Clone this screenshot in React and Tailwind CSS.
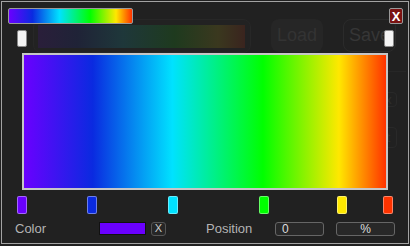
import React from "react";

const spectrum =
  "linear-gradient(to right, #6a00ff 0%, #0a2ae0 19%, #00e2ff 41%, #00ff00 66%, #ffe800 87%, #ff3300 100%)";

const stops = [
  { x: 15, color: "#6a00ff" },
  { x: 85, color: "#0a2ae0" },
  { x: 166, color: "#00e2ff" },
  { x: 257, color: "#00ff00" },
  { x: 335, color: "#ffe800" },
  { x: 381, color: "#ff3300" },
];

function Ghost() {
  // window sitting behind the popup, showing through faintly
  return (
    <div className="absolute inset-0 pointer-events-none pt-[19px] pl-[33px]">
      <div className="flex items-start">
        <div className="w-[218px] h-[34px] rounded-lg border border-[#272727] bg-[#222] pl-[4px] pt-[5px]">
          <div className="w-[207px] h-[23px] opacity-[0.11]" style={{ background: spectrum }} />
        </div>
        <div className="ml-[20px] w-[52px] h-[33px] rounded-lg bg-[#262626] flex items-center justify-center text-[18px] text-[#333]">
          Load
        </div>
        <div className="ml-[20px] w-[53px] h-[33px] rounded-lg border border-[#2b2b2b] flex items-center justify-center text-[18px] text-[#363636]">
          Save
        </div>
      </div>
      <div className="ml-[347px] mt-[18px] flex flex-col gap-[20px]">
        <div className="w-[26px] h-px bg-[#272727]" />
        <div className="w-[17px] h-[15px] rounded border border-[#292929] text-[13px] text-[#2f2f2f] flex items-center justify-center">
          x
        </div>
        <div className="w-[17px] h-[21px] rounded border border-[#292929] text-[13px] text-[#2f2f2f] flex items-center justify-center">
          t
        </div>
      </div>
    </div>
  );
}

export default function App() {
  return (
    <div
      className="relative w-[410px] h-[246px] bg-[#212121] overflow-hidden p-px"
      style={{ fontFamily: '"Liberation Sans", Arial, sans-serif' }}
    >
      <Ghost />
      <div className="relative w-[408px] h-[243px] border border-[#a3a3a3]">
        {/* top row: preview + close */}
        <div className="flex items-start justify-between mt-[6px] pl-[6px] pr-[5px]">
          <div
            className="w-[125px] h-[16px] rounded-[2px] border border-[#9a9a9a]"
            style={{ background: spectrum }}
          />
          <button className="w-[14px] h-[16px] rounded-[2px] border border-[#999] bg-[#7a1212] text-white text-[13px] font-bold leading-none flex items-center justify-center">
            X
          </button>
        </div>

        {/* range handles */}
        <div className="flex justify-between mt-[6px] pl-[15px] pr-[14px]">
          <div className="w-[10px] h-[17px] rounded-[2px] border border-[#8a8a8a] bg-[#f4f4f4]" />
          <div className="w-[10px] h-[17px] rounded-[2px] border border-[#8a8a8a] bg-[#f4f4f4]" />
        </div>

        {/* main gradient */}
        <div
          className="mt-[6px] ml-[20px] w-[366px] h-[137px] border-2 border-[#c6c6c6]"
          style={{ background: spectrum }}
        />

        {/* color stops, placed by their position in the gradient */}
        <div className="relative h-[18px] mt-[6px]">
          {stops.map((s) => (
            <div
              key={s.x}
              className="absolute top-0 w-[10px] h-[18px] rounded-[2px] border border-white/40"
              style={{ left: s.x, background: s.color }}
            />
          ))}
        </div>

        {/* bottom controls */}
        <div className="flex items-center mt-[8px] pl-[13px] h-[13px] text-[13px] text-[#b4b4b4]">
          <span className="w-[84px]">Color</span>
          <div className="w-[47px] h-[13px] border border-[#111] bg-[#6a00ff]" />
          <button className="ml-[5px] w-[15px] h-[14px] rounded-[3px] border border-[#555] bg-[#262626] text-[11px] text-[#ccc] leading-none flex items-center justify-center">
            X
          </button>
          <span className="ml-[40px] w-[69px]">Position</span>
          <div className="w-[49px] h-[14px] rounded-[3px] border border-[#666] bg-[#282828] pl-[6px] text-[12px] leading-[12px] text-[#ddd]">
            0
          </div>
          <div className="ml-[12px] w-[59px] h-[14px] rounded-[3px] border border-[#666] bg-[#282828] text-center text-[12px] leading-[12px] text-[#ddd]">
            %
          </div>
        </div>
      </div>
    </div>
  );
}
